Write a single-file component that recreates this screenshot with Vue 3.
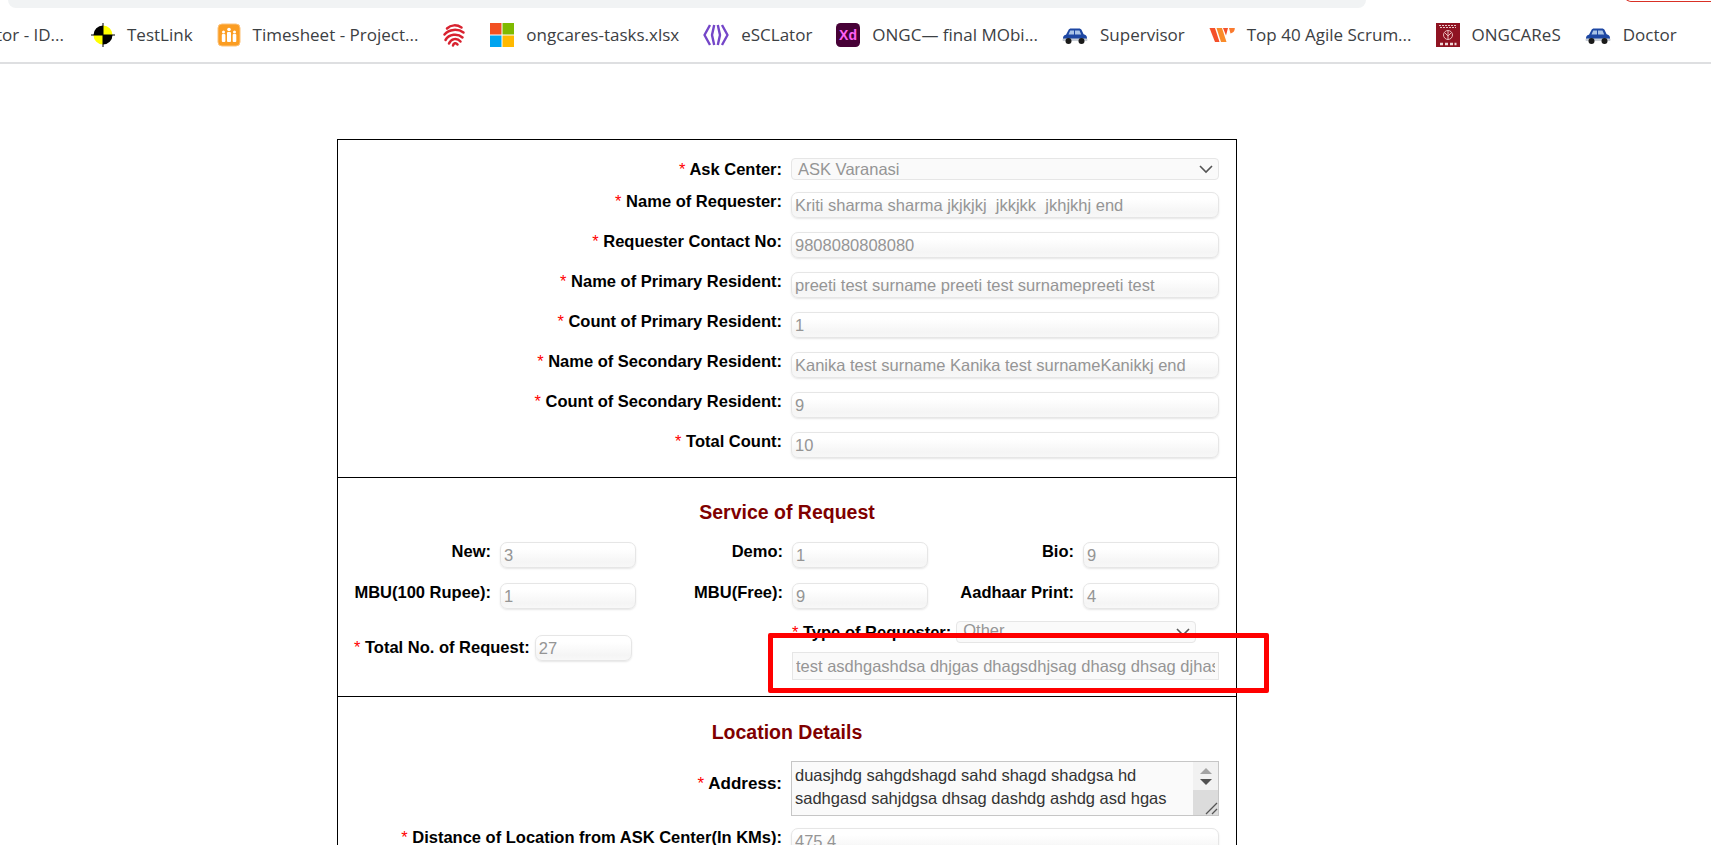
<script setup>
// Browser bookmark strip above a read-only request form. Icons are drawn inline.
const bookmarks = [
  { icon: 'none', label: 'tor - ID...', first: true },
  { icon: 'target', label: 'TestLink' },
  { icon: 'people', label: 'Timesheet - Project...' },
  { icon: 'print', label: '' },
  { icon: 'ms', label: 'ongcares-tasks.xlsx' },
  { icon: 'esc', label: 'eSCLator' },
  { icon: 'xd', label: 'ONGC— final MObi...' },
  { icon: 'car', label: 'Supervisor' },
  { icon: 'w', label: 'Top 40 Agile Scrum...' },
  { icon: 'ongc', label: 'ONGCAReS' },
  { icon: 'car', label: 'Doctor' },
]

const people = [
  { label: 'Name of Requester:', value: 'Kriti sharma sharma jkjkjkj  jkkjkk  jkhjkhj end' },
  { label: 'Requester Contact No:', value: '9808080808080' },
  { label: 'Name of Primary Resident:', value: 'preeti test surname preeti test surnamepreeti test' },
  { label: 'Count of Primary Resident:', value: '1' },
  { label: 'Name of Secondary Resident:', value: 'Kanika test surname Kanika test surnameKanikkj end' },
  { label: 'Count of Secondary Resident:', value: '9' },
  { label: 'Total Count:', value: '10' },
]

const services = [
  { label: 'New:', value: '3' },
  { label: 'Demo:', value: '1' },
  { label: 'Bio:', value: '9' },
  { label: 'MBU(100 Rupee):', value: '1' },
  { label: 'MBU(Free):', value: '9' },
  { label: 'Aadhaar Print:', value: '4' },
]
</script>

<template>
  <div class="page">
    <div class="chrome">
      <div class="omnibox"></div>
      <div class="profile"></div>
    </div>
    <nav class="bookmarks">
      <a v-for="(b, i) in bookmarks" :key="i" class="bookmark" :class="{ 'is-first': b.first }">
        <svg v-if="b.icon === 'target'" class="ico" viewBox="0 0 24 24">
          <path d="M12 12V2.500A9.500 9.500 0 0 1 21.500 12zM12 12v9.500A9.500 9.500 0 0 1 2.500 12z" fill="#ffff00" />
          <path d="M12 12H2.500A9.500 9.500 0 0 1 12 2.500zM12 12h9.500A9.500 9.500 0 0 1 12 21.500z" fill="#000" />
          <path d="M12 0v24M0 12h24" stroke="#000" stroke-width="1" />
        </svg>
        <svg v-else-if="b.icon === 'people'" class="ico" viewBox="0 0 24 24">
          <rect x="1" y="1" width="22" height="22" rx="4" fill="#fb9d22" stroke="#fcc27a" />
          <g fill="#fff">
            <circle cx="12" cy="6.500" r="1.800" />
            <rect x="10" y="9" width="4" height="10" rx="1" />
            <circle cx="6.500" cy="9" r="1.500" />
            <rect x="4.800" y="11" width="3.600" height="8" rx="1" />
            <circle cx="17.500" cy="9" r="1.500" />
            <rect x="15.700" y="11" width="3.600" height="8" rx="1" />
          </g>
        </svg>
        <svg v-else-if="b.icon === 'print'" class="ico" viewBox="0 0 24 24" fill="none" stroke="#d8222f" stroke-width="2.500" stroke-linecap="round">
          <path d="M5 5.500C9 1.500 15 1.500 19.500 4.500" />
          <path d="M2.500 11.500C7 6 16 5.500 21.500 9.500" />
          <path d="M3.500 17C7 11 15.500 10 20.500 14.500" />
          <path d="M7 20.500C9 15.500 15 14.500 18.500 18.500" />
          <path d="M11 22.500C11.500 20 14 19.500 15.500 21.500" />
        </svg>
        <svg v-else-if="b.icon === 'ms'" class="ico" viewBox="0 0 24 24">
          <rect width="11.500" height="11.500" fill="#f25022" />
          <rect x="12.500" width="11.500" height="11.500" fill="#7fba00" />
          <rect y="12.500" width="11.500" height="11.500" fill="#00a4ef" />
          <rect x="12.500" y="12.500" width="11.500" height="11.500" fill="#ffb900" />
        </svg>
        <svg v-else-if="b.icon === 'esc'" class="ico ico-wide" viewBox="0 0 26 24" fill="none" stroke="#7446c8" stroke-width="2.400" stroke-linejoin="round">
          <path d="M7 2 1.500 12 7 22" />
          <path d="M11.200 2 9 12l2.200 10" />
          <path d="M14.800 2 17 12l-2.200 10" />
          <path d="M19 2l5.500 10L19 22" />
        </svg>
        <svg v-else-if="b.icon === 'xd'" class="ico" viewBox="0 0 24 24">
          <rect width="24" height="24" rx="4.500" fill="#470137" />
          <text x="12" y="17" text-anchor="middle" class="xd-text">Xd</text>
        </svg>
        <svg v-else-if="b.icon === 'car'" class="ico ico-wide" viewBox="0 0 26 24">
          <path d="M1 15c0-2 1.500-3 3-3.300L6.500 7C7 6 7.800 5.500 9 5.500h8c1.200 0 2 .5 2.600 1.500l2 4.200c2 .4 3.400 1.600 3.400 3.800v3H1z" fill="#1d47a3" />
          <path d="M8.200 7.500H12V11.500H6.500zM13 7.500h4.500l1.700 4H13z" fill="#a9c3e6" />
          <rect x="0.500" y="15.500" width="25" height="2.500" rx="1" fill="#c8ced6" />
          <circle cx="6.500" cy="18" r="3" fill="#1a1a1a" />
          <circle cx="19.500" cy="18" r="3" fill="#1a1a1a" />
        </svg>
        <svg v-else-if="b.icon === 'w'" class="ico ico-wide" viewBox="0 0 26 24">
          <path d="M0.500 5h5.500l4.500 14H6z" fill="#f4502a" />
          <path d="M7.500 5H13l4.500 14H12z" fill="#f98b2a" />
          <path d="M14 5h5l-2 7.500z" fill="#f4502a" />
          <path d="M20 5h5.800c.2 3-1.800 5-4.300 5.500z" fill="#fa7a2e" />
        </svg>
        <svg v-else-if="b.icon === 'ongc'" class="ico" viewBox="0 0 24 24">
          <rect width="24" height="24" fill="#8f1322" />
          <path d="M3 2.500h18M4 4.500h16" stroke="#e8c8c8" stroke-width="1" stroke-dasharray="2 1" />
          <circle cx="12" cy="12" r="4.500" fill="none" stroke="#e8b8b8" stroke-width="1" />
          <path d="M12 7v10M9 10l3 3 3-3" fill="none" stroke="#e8b8b8" stroke-width="1" />
          <path d="M4 21h3M9 21h3M14 21h3M18.500 21h2" stroke="#f0d8d8" stroke-width="2.500" />
        </svg>
        <span v-if="b.label" class="bookmark__text">{{ b.label }}</span>
      </a>
    </nav>

    <main class="form">
      <section class="section section--first">
        <div class="row row--select">
          <label class="label"><i>*</i> Ask Center:</label>
          <div class="select">
            <span>ASK Varanasi</span>
            <svg class="chevron" viewBox="0 0 14 9"><path d="M1 1l6 6 6-6" fill="none" stroke="#555" stroke-width="1.600" /></svg>
          </div>
        </div>
        <div v-for="p in people" :key="p.label" class="row">
          <label class="label"><i>*</i> {{ p.label }}</label>
          <input class="input" :value="p.value" readonly />
        </div>
      </section>

      <section class="section section--service">
        <h2 class="title">Service of Request</h2>
        <div class="service-grid">
          <div v-for="s in services" :key="s.label" class="service">
            <label class="label">{{ s.label }}</label>
            <input class="input" :value="s.value" readonly />
          </div>
        </div>
        <div class="totals">
          <div class="total">
            <label class="label label--total"><i>*</i> Total No. of Request:</label>
            <input class="input input--total" value="27" readonly />
          </div>
          <div class="requester">
            <div class="requester__type">
              <label class="label"><i>*</i> Type of Requester:</label>
              <div class="select select--type">
                <span>Other</span>
                <svg class="chevron" viewBox="0 0 14 9"><path d="M1 1l6 6 6-6" fill="none" stroke="#555" stroke-width="1.600" /></svg>
              </div>
            </div>
            <input class="input input--plain" value="test asdhgashdsa dhjgas dhagsdhjsag dhasg dhsag djhasgd" readonly />
          </div>
        </div>
        <div class="callout"></div>
      </section>

      <section class="section section--location">
        <h2 class="title title--location">Location Details</h2>
        <div class="row row--address">
          <label class="label label--address"><i>*</i> Address:</label>
          <div class="textarea">
            <div class="textarea__text">duasjhdg sahgdshagd sahd shagd shadgsa hd<br />sadhgasd sahjdgsa dhsag dashdg ashdg asd hgas</div>
            <div class="scroll">
              <div class="scroll__arrows">
                <span class="arrow arrow--up"></span>
                <span class="arrow arrow--down"></span>
              </div>
              <div class="scroll__grip">
                <svg viewBox="0 0 14 14" width="14" height="14"><path d="M2 13 13 2M8 13l5-5" stroke="#555" stroke-width="1.300" /></svg>
              </div>
            </div>
          </div>
        </div>
        <div class="row">
          <label class="label"><i>*</i> Distance of Location from ASK Center(In KMs):</label>
          <input class="input" value="475.4" readonly />
        </div>
      </section>
    </main>
  </div>
</template>

<style>
html,
body {
  margin: 0;
  background: #fff;
  overflow: hidden;
}
</style>

<style scoped>
.page {
  height: 845px;
  overflow: hidden;
  background: #fff;
  font-family: "Liberation Sans", Arial, sans-serif;
}

.chrome {
  height: 8px;
  display: flex;
  justify-content: space-between;
  overflow: hidden;
}
.omnibox {
  width: 1358px;
  margin-left: 8px;
  height: 8px;
  background: #f1f3f4;
  border-radius: 0 0 16px 16px;
}
.profile {
  width: 86px;
  height: 6px;
  margin-top: -4px;
  box-sizing: border-box;
  border: 1.500px solid #d93025;
  border-radius: 0 0 0 10px;
  border-right: 0;
}

.bookmarks {
  height: 54px;
  display: flex;
  align-items: center;
  gap: 24px;
  border-bottom: 2px solid #dedfe1;
  white-space: nowrap;
  overflow: hidden;
  font-family: "Open Sans", "Noto Sans", sans-serif;
  font-size: 17px;
  color: #3c4043;
}
.bookmark {
  display: flex;
  align-items: center;
  gap: 12px;
  flex: none;
}
.bookmark.is-first {
  margin-left: -4px;
  width: 71px;
}
.bookmark__text {
  margin-top: -2px;
}
.ico {
  width: 24px;
  height: 24px;
  flex: none;
}
.ico-wide {
  width: 26px;
}
.xd-text {
  font-family: "Liberation Sans", Arial, sans-serif;
  font-weight: 700;
  font-size: 14px;
  fill: #ff61f6;
}

.form {
  width: 900px;
  margin: 75px 0 0 337px;
  border: 1px solid #000;
  box-sizing: border-box;
}
.section {
  box-sizing: border-box;
  padding: 0 17px 0 0;
  position: relative;
}
.section--first {
  height: 338px;
  padding-top: 18px;
  border-bottom: 1px solid #000;
}
.section--service {
  height: 219px;
  border-bottom: 1px solid #000;
}
.section--location {
  height: 200px;
}

.title {
  margin: 0;
  padding: 22px 0 0 17px;
  height: 64px;
  box-sizing: border-box;
  text-align: center;
  font-size: 19.500px;
  line-height: 24px;
  font-weight: 700;
  color: #800000;
}
.title--location {
  padding-top: 23px;
}

.row {
  display: grid;
  grid-template-columns: 1fr 428px;
  column-gap: 9px;
  margin-top: 14px;
}
.row--select {
  margin-top: 0;
  margin-bottom: -2px;
  align-items: center;
}
.row--address {
  margin-top: 0;
  margin-bottom: -2px;
  align-items: center;
}

.label {
  font-size: 16.500px;
  line-height: 18px;
  font-weight: 700;
  color: #000;
  text-align: right;
  white-space: nowrap;
}
.label i {
  font-style: normal;
  font-weight: 400;
  color: #f00;
}
.label--address {
  font-size: 17px;
  margin-bottom: 10px;
}
.label--total {
  margin-bottom: 3px;
}

.input {
  display: block;
  width: 100%;
  height: 26px;
  box-sizing: border-box;
  padding: 0 3px;
  border: 1px solid #e6e6e6;
  border-radius: 7px;
  background: linear-gradient(#fff 0, #fff 25%, #f5f5f5 80%, #f8f8f8 100%);
  box-shadow: 0 1px 2px rgba(0, 0, 0, 0.1);
  color: #959595;
  font: 400 16.500px "Liberation Sans", Arial, sans-serif;
  outline: none;
}
.input--total {
  width: 97px;
  flex: none;
}
.input--plain {
  height: 28px;
  border-radius: 0;
  background: #fafafa;
  box-shadow: none;
}

.select {
  height: 22px;
  box-sizing: border-box;
  display: flex;
  align-items: center;
  justify-content: space-between;
  padding: 0 5px 0 6px;
  border: 1px solid #e6e6e6;
  border-radius: 4px;
  background: #fafafa;
  color: #959595;
  font-size: 16.500px;
}
.chevron {
  width: 14px;
  height: 9px;
}
.select--type {
  width: 240px;
  flex: none;
  overflow: hidden;
}
.select--type span {
  margin-top: -3px;
}

.service-grid {
  display: grid;
  grid-template-columns: 298px 292px 291px;
  row-gap: 15px;
}
.service {
  display: grid;
  grid-template-columns: 1fr 136px;
  column-gap: 9px;
}

.totals {
  display: flex;
  justify-content: space-between;
  margin-top: 12px;
}
.total {
  display: flex;
  align-items: center;
  gap: 5px;
  height: 26px;
  margin: 14px 0 0 16px;
}
.requester {
  width: 427px;
  display: flex;
  flex-direction: column;
  gap: 9px;
}
.requester__type {
  display: flex;
  align-items: center;
  gap: 5px;
}

.callout {
  position: absolute;
  left: 430px;
  top: 155px;
  width: 501px;
  height: 60px;
  box-sizing: border-box;
  border: 5px solid #f00;
  border-radius: 2px;
}

.textarea {
  height: 55px;
  box-sizing: border-box;
  display: flex;
  border: 1.500px solid #c6c6c6;
  background: #fafafa;
}
.textarea__text {
  flex: 1;
  padding: 2px 3px;
  font-size: 16.500px;
  line-height: 23px;
  color: #333;
  white-space: nowrap;
  overflow: hidden;
}
.scroll {
  width: 25px;
  flex: none;
  display: flex;
  flex-direction: column;
  background: #f1f1f1;
}
.scroll__arrows {
  flex: 1;
  display: flex;
  flex-direction: column;
  align-items: center;
  gap: 5px;
  padding-top: 6px;
}
.arrow {
  width: 0;
  height: 0;
  border-left: 6px solid transparent;
  border-right: 6px solid transparent;
}
.arrow--up {
  border-bottom: 6px solid #a3a3a3;
}
.arrow--down {
  border-top: 6px solid #505050;
}
.scroll__grip {
  height: 25px;
  background: #dcdcdc;
  display: flex;
  justify-content: flex-end;
  align-items: flex-end;
}
</style>
